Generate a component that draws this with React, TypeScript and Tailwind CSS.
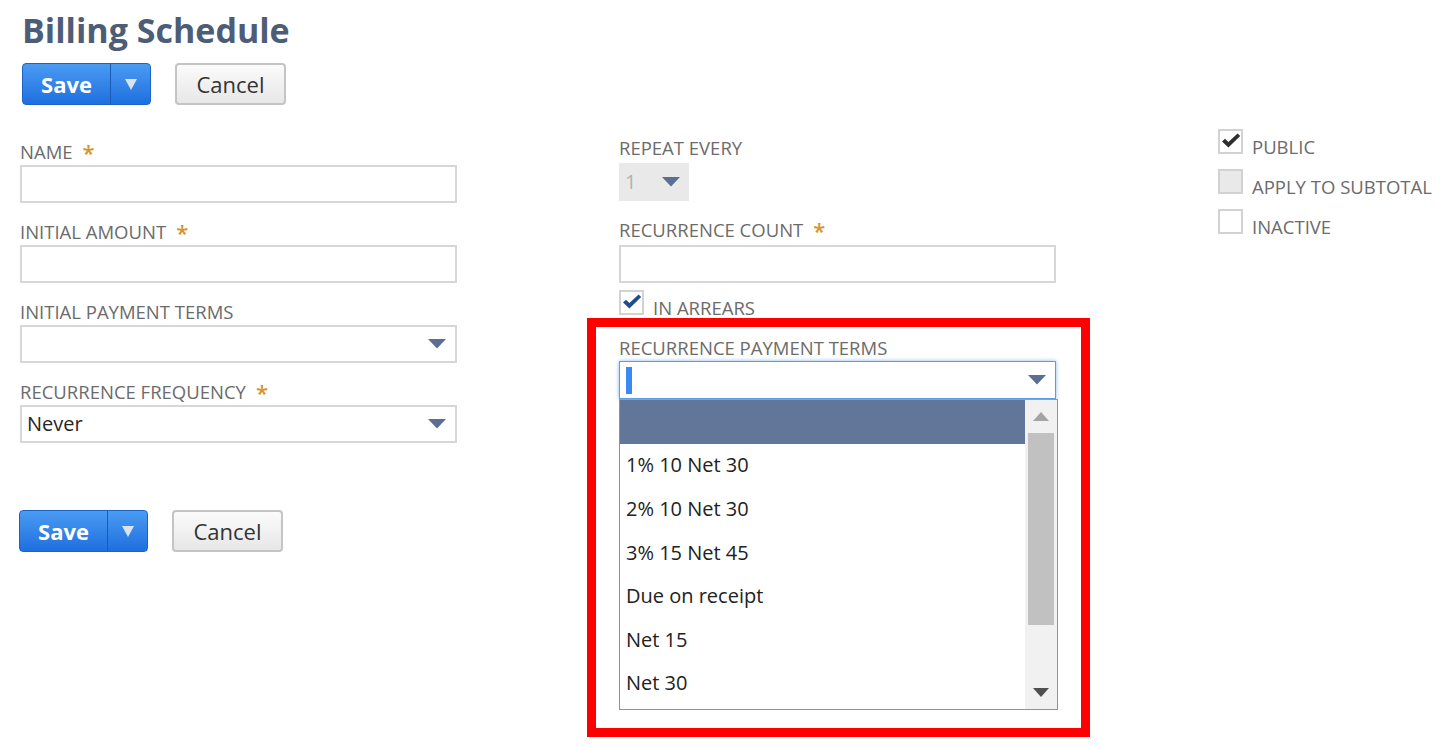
import type { ReactNode } from "react";

const font = "font-['Open_Sans','Liberation_Sans',sans-serif]";

function Caret({ color = "#5a6f92" }: { color?: string }) {
  return (
    <svg width="18" height="10" viewBox="0 0 18 10">
      <path d="M0 0 H18 L9 9.5 Z" fill={color} />
    </svg>
  );
}

function Check({ color }: { color: string }) {
  return (
    <svg width="20" height="16" viewBox="0 0 20 16">
      <path d="M1 8.6 L4 5.8 L7.4 9.1 L16.6 0.4 L19.2 3.1 L7.4 14.6 Z" fill={color} />
    </svg>
  );
}

function Label({ text, required }: { text: string; required?: boolean }) {
  return (
    <div className="h-[22px] flex items-start text-[18.5px] leading-[22px] text-[#6b6b6b] whitespace-nowrap">
      <span>{text}</span>
      {required && <span className="ml-[10px] text-[#d4952c] text-[22px] leading-[22px] font-semibold">*</span>}
    </div>
  );
}

function Field({ label, required, tight, children }: { label: string; required?: boolean; tight?: boolean; children: ReactNode }) {
  return (
    <div className={tight ? "flex flex-col gap-[2px]" : "flex flex-col gap-[4px]"}>
      <Label text={label} required={required} />
      {children}
    </div>
  );
}

function TextBox() {
  return <div className="h-[38px] border-2 border-[#d7d7d7] bg-white" />;
}

function SelectBox({ value }: { value?: string }) {
  return (
    <div className="h-[38px] border-2 border-[#d7d7d7] bg-white flex items-center justify-between pl-[5px] pr-[9px]">
      <span className="text-[20px] text-[#262626]">{value}</span>
      <Caret />
    </div>
  );
}

function CheckBox({ state }: { state: "dark" | "blue" | "empty" | "disabled" }) {
  return (
    <div
      className={
        "w-[25px] h-[25px] border-2 border-[#d2d2d2] flex items-start justify-center pt-[2px] shrink-0 " +
        (state === "disabled" ? "bg-[#e9e9e9]" : "bg-white")
      }
    >
      {state === "dark" && <Check color="#2e2e2e" />}
      {state === "blue" && <Check color="#1f4e8f" />}
    </div>
  );
}

function CheckRow({ state, text }: { state: "dark" | "blue" | "empty" | "disabled"; text: string }) {
  return (
    <div className="flex items-end gap-[9px]">
      <CheckBox state={state} />
      <span className="text-[18.5px] leading-[18px] text-[#6b6b6b] whitespace-nowrap -mb-[2px]">{text}</span>
    </div>
  );
}

function Buttons() {
  return (
    <div className="flex items-center gap-[24px]">
      <div className="flex h-[42px] rounded-[4px] border border-[#1b63c6] bg-gradient-to-b from-[#4a9bf2] to-[#1e6fdf] overflow-hidden">
        <div className="w-[87px] flex items-center justify-center text-white font-bold text-[22px]">Save</div>
        <div className="w-[40px] border-l border-[#1a5cb5] flex items-center justify-center">
          <svg width="12" height="11" viewBox="0 0 12 11">
            <path d="M0 0 H12 L6 11 Z" fill="#d9e3ef" />
          </svg>
        </div>
      </div>
      <div className="w-[111px] h-[42px] rounded-[4px] border-2 border-[#c4c4c4] bg-gradient-to-b from-[#fbfbfb] to-[#e7e7e7] flex items-center justify-center text-[22px] text-[#333]">
        Cancel
      </div>
    </div>
  );
}

const terms = ["", "1% 10 Net 30", "2% 10 Net 30", "3% 15 Net 45", "Due on receipt", "Net 15", "Net 30"];

export default function App() {
  return (
    <div className={`${font} w-[1453px] h-[746px] bg-white overflow-hidden pl-[20px] pt-[10px]`}>
      <h1 className="text-[34px] leading-[40px] font-bold text-[#4d5c77] ml-[2px]">Billing Schedule</h1>
      <div className="mt-[13px] ml-[2px]">
        <Buttons />
      </div>

      <div className="flex items-start mt-[24px]">
        {/* left column */}
        <div className="w-[437px] pt-[12px] flex flex-col gap-[18px]">
          <Field label="NAME" required tight>
            <TextBox />
          </Field>
          <Field label="INITIAL AMOUNT" required tight>
            <TextBox />
          </Field>
          <Field label="INITIAL PAYMENT TERMS" tight>
            <SelectBox />
          </Field>
          <Field label="RECURRENCE FREQUENCY" required tight>
            <SelectBox value="Never" />
          </Field>
          <div className="mt-[49px] -ml-[1px]">
            <Buttons />
          </div>
        </div>

        {/* middle column */}
        <div className="w-[437px] ml-[162px] pt-[8px] flex flex-col">
          <Field label="REPEAT EVERY">
            <div className="w-[70px] h-[38px] bg-[#e9e9e9] flex items-center justify-between pl-[6px] pr-[9px]">
              <span className="text-[20px] text-[#b3b3b3]">1</span>
              <Caret />
            </div>
          </Field>
          <div className="mt-[18px]">
            <Field label="RECURRENCE COUNT" required>
              <TextBox />
            </Field>
          </div>
          <div className="mt-[7px]">
            <CheckRow state="blue" text="IN ARREARS" />
          </div>

          {/* highlighted dropdown */}
          <div className="mt-[3px] -ml-[32px] w-[503px] border-[9px] border-[#ff0000] pl-[23px] pr-[23px] pt-[10px] pb-[18px]">
            <div className="flex flex-col gap-[2px]">
              <Label text="RECURRENCE PAYMENT TERMS" />
              <div className="w-[437px] h-[38px] border border-[#5a9de9] shadow-[0_0_4px_#86b8f1] bg-white flex items-center justify-between pl-[6px] pr-[9px]">
                <div className="w-[6px] h-[27px] bg-[#3a8af5]" />
                <Caret />
              </div>
            </div>
            <div className="w-[439px] h-[311px] border border-[#5a9de9] bg-white flex overflow-hidden">
              <div className="flex-1 flex flex-col">
                {terms.map((t, i) => (
                  <div
                    key={i}
                    className={
                      "h-[43.6px] shrink-0 flex items-center pl-[6px] text-[20px] text-[#222] " +
                      (i === 0 ? "bg-[#62769a]" : "")
                    }
                  >
                    {t}
                  </div>
                ))}
              </div>
              <div className="w-[32px] bg-[#f1f1f1] flex flex-col items-center">
                <div className="h-[33px] flex items-center justify-center">
                  <svg width="16" height="9" viewBox="0 0 16 9">
                    <path d="M0 9 H16 L8 0 Z" fill="#a3a3a3" />
                  </svg>
                </div>
                <div className="w-[26px] h-[192px] bg-[#c1c1c1]" />
                <div className="flex-1 flex items-end justify-center pb-[12px]">
                  <svg width="16" height="9" viewBox="0 0 16 9">
                    <path d="M0 0 H16 L8 9 Z" fill="#4f4f4f" />
                  </svg>
                </div>
              </div>
            </div>
          </div>
        </div>

        {/* right column */}
        <div className="ml-[162px] flex flex-col gap-[15px]">
          <CheckRow state="dark" text="PUBLIC" />
          <CheckRow state="disabled" text="APPLY TO SUBTOTAL" />
          <CheckRow state="empty" text="INACTIVE" />
        </div>
      </div>
    </div>
  );
}
